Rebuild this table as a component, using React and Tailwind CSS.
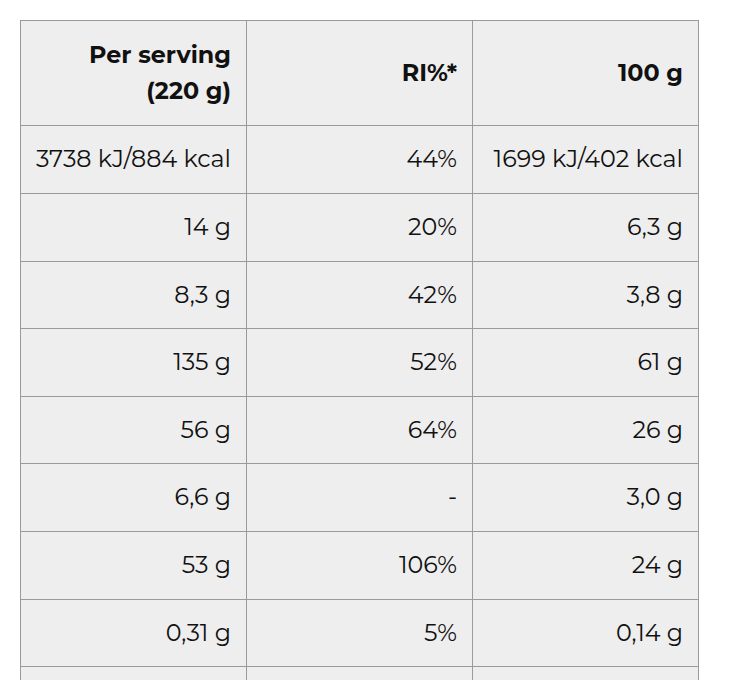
import React from 'react';

const rows = [
  ['3738 kJ/884 kcal', '44%', '1699 kJ/402 kcal'],
  ['14 g', '20%', '6,3 g'],
  ['8,3 g', '42%', '3,8 g'],
  ['135 g', '52%', '61 g'],
  ['56 g', '64%', '26 g'],
  ['6,6 g', '-', '3,0 g'],
  ['53 g', '106%', '24 g'],
  ['0,31 g', '5%', '0,14 g'],
  ['\u00a0', '\u00a0', '\u00a0'],
];

const cell = 'border border-[#9a9a9a] px-[15px] text-right align-middle leading-[36.6px] w-[226px]';

export default function App() {
  return (
    <div className="bg-white min-h-screen p-5 font-['Montserrat','DejaVu_Sans',sans-serif] text-[#111] text-[23.8px]">
      <table className="w-[679px] border-collapse bg-[#eeeeee] table-fixed">
        <thead>
          <tr>
            <th className={`${cell} py-[15.6px] font-bold`}>Per serving<br />(220 g)</th>
            <th className={`${cell} py-[15.6px] font-bold`}>RI%*</th>
            <th className={`${cell} py-[15.6px] font-bold`}>100 g</th>
          </tr>
        </thead>
        <tbody>
          {rows.map((r, i) => (
            <tr key={i}>
              {r.map((v, j) => (
                <td key={j} className={`${cell} py-[15px]`}>{v}</td>
              ))}
            </tr>
          ))}
        </tbody>
      </table>
    </div>
  );
}
